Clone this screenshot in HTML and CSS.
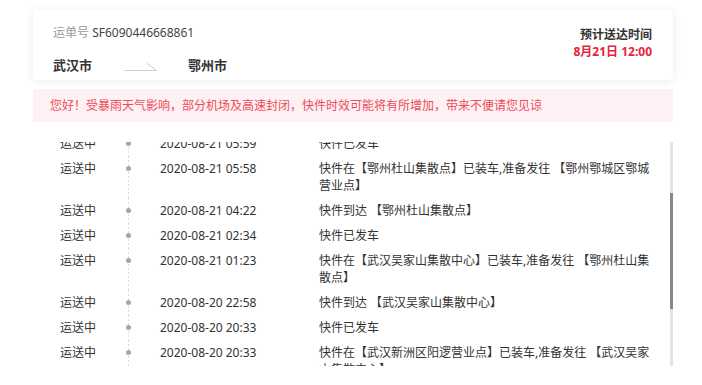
FILE: index.html
```html
<!DOCTYPE html>
<html lang="zh-CN">
<head>
<meta charset="utf-8">
<title>快件跟踪</title>
<link rel="stylesheet" href="styles.css">
</head>
<body>
<div class="page">
  <div class="card">
    <div class="card-left">
      <div class="waybill"><span class="label">运单号</span> <span class="no">SF6090446668861</span></div>
      <div class="route">
        <span class="city">武汉市</span>
        <svg class="arrow" width="33" height="9" viewBox="0 0 33 9"><path d="M0 8.5H32.5L22.5 1" fill="none" stroke="#cfcfcf" stroke-width="1"/></svg>
        <span class="city">鄂州市</span>
      </div>
    </div>
    <div class="card-right">
      <div class="eta-label">预计送达时间</div>
      <div class="eta">8月21日 12:00</div>
    </div>
  </div>

  <div class="notice">您好！受暴雨天气影响，部分机场及高速封闭，快件时效可能将有所增加，带来不便请您见谅</div>

  <div class="track">
    <div class="rows">
      <div class="row"><span class="status">运送中</span><span class="node"></span><span class="time">2020-08-21 05:59</span><span class="desc">快件已发车</span></div>
      <div class="row"><span class="status">运送中</span><span class="node"></span><span class="time">2020-08-21 05:58</span><span class="desc">快件在【鄂州杜山集散点】已装车,准备发往 【鄂州鄂城区鄂城营业点】</span></div>
      <div class="row"><span class="status">运送中</span><span class="node"></span><span class="time">2020-08-21 04:22</span><span class="desc">快件到达 【鄂州杜山集散点】</span></div>
      <div class="row"><span class="status">运送中</span><span class="node"></span><span class="time">2020-08-21 02:34</span><span class="desc">快件已发车</span></div>
      <div class="row"><span class="status">运送中</span><span class="node"></span><span class="time">2020-08-21 01:23</span><span class="desc">快件在【武汉吴家山集散中心】已装车,准备发往 【鄂州杜山集散点】</span></div>
      <div class="row"><span class="status">运送中</span><span class="node"></span><span class="time">2020-08-20 22:58</span><span class="desc">快件到达 【武汉吴家山集散中心】</span></div>
      <div class="row"><span class="status">运送中</span><span class="node"></span><span class="time">2020-08-20 20:33</span><span class="desc">快件已发车</span></div>
      <div class="row"><span class="status">运送中</span><span class="node"></span><span class="time">2020-08-20 20:33</span><span class="desc">快件在【武汉新洲区阳逻营业点】已装车,准备发往 【武汉吴家山集散中心】</span></div>
    </div>
    <div class="scrollbar"><div class="thumb"></div></div>
  </div>
</div>
</body>
</html>
```

FILE: styles.css
```css
* { box-sizing: border-box; }

html, body {
  margin: 0;
  padding: 0;
  background: #fff;
}

body {
  font-family: "Noto Sans", "Noto Sans CJK SC", sans-serif;
  font-size: 12px;
  line-height: 17px;
  color: #333;
}

.page {
  width: 640px;
  margin: 10px 0 0 33px;
}

.card {
  height: 70px;
  background: #fff;
  border-radius: 4px;
  box-shadow: 0 1px 10px rgba(0, 0, 0, 0.09);
  padding: 14px 21px 0 20px;
  display: flex;
  justify-content: space-between;
}

.waybill .label { color: #999; }
.waybill .no { color: #444; }

.route {
  display: flex;
  align-items: center;
  margin-top: 14px;
  height: 20px;
}

.city {
  font-size: 13px;
  font-weight: bold;
  color: #333;
  line-height: 20px;
}

.arrow {
  display: block;
  margin: 2px 31px 0 32px;
}

.card-right {
  text-align: right;
  padding-top: 2px;
}

.eta-label {
  font-weight: bold;
  color: #333;
}

.eta {
  font-weight: bold;
  color: #e1253b;
}

.notice {
  margin-top: 9px;
  height: 33px;
  background: #fdf1f3;
  color: #ee4b5c;
  padding: 8px 0 0 17px;
  line-height: 17px;
}

.track {
  position: relative;
  margin-top: 20px;
  height: 224px;
  overflow: hidden;
}

.rows {
  margin-top: -11px;
}

.row {
  display: grid;
  grid-template-columns: 60px 16px 183px 336px;
  padding: 4px 0 4px 27px;
}

.node {
  position: relative;
}

.node::before {
  content: "";
  position: absolute;
  left: 8px;
  top: -4px;
  bottom: -4px;
  width: 1px;
  background: repeating-linear-gradient(to bottom, #dcdcdc 0 2px, transparent 2px 4px);
}

.node::after {
  content: "";
  position: absolute;
  left: 6px;
  top: 6px;
  width: 5px;
  height: 5px;
  border-radius: 50%;
  background: #a6a6a6;
}

.time {
  padding-left: 24px;
}

.scrollbar {
  position: absolute;
  top: 0;
  right: 0;
  width: 3px;
  height: 224px;
  background: #e4e4e4;
}

.thumb {
  margin-top: 51px;
  height: 116px;
  background: #888;
}
```
